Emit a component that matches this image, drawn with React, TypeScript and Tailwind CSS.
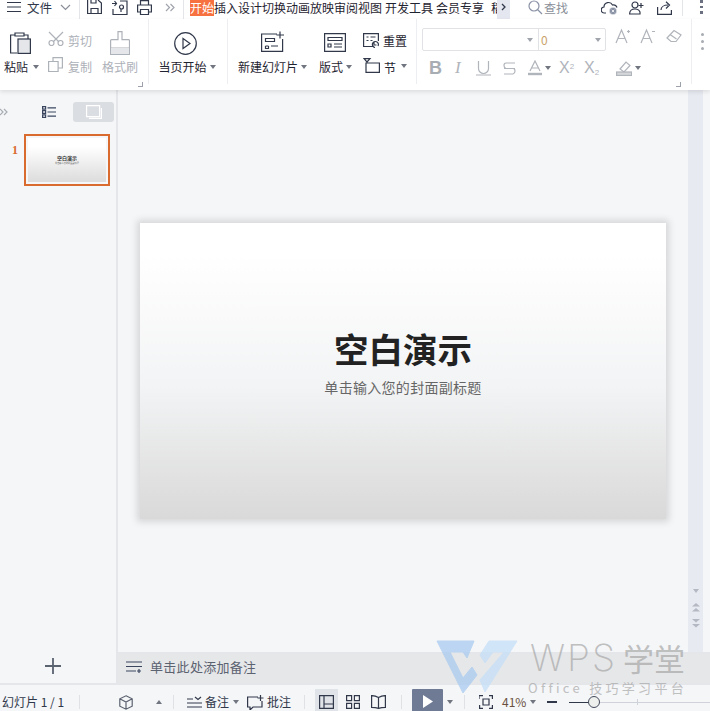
import type { ReactNode } from "react";

const FONT = { fontFamily: '"Noto Sans CJK SC", "Liberation Sans", sans-serif' };

function Icon({ w, h, className, children }: { w: number; h: number; className?: string; children: ReactNode }) {
  return (
    <svg
      width={w}
      height={h}
      viewBox={`0 0 ${w} ${h}`}
      fill="none"
      stroke="currentColor"
      strokeWidth="1.2"
      className={`shrink-0 ${className ?? ""}`}
    >
      {children}
    </svg>
  );
}

function Caret({ className }: { className?: string }) {
  return <span className={`inline-block h-0 w-0 border-x-[3.5px] border-t-[4px] border-x-transparent border-t-[#70757f] ${className ?? ""}`} />;
}

function TitleBar() {
  return (
    <div className="flex h-[19px] shrink-0 items-start overflow-hidden bg-white text-[12px] leading-[15px] text-[#30384a]">
      <Icon w={14} h={12} className="ml-[7px] mt-[1px]">
        <path d="M0 1.5h14M0 6h14M0 10.5h14" />
      </Icon>
      <span className="ml-[6px] text-[12.5px] leading-[15px]">文件</span>
      <Icon w={11} h={7} className="ml-[8px] mt-[4px] text-[#8a8f99]">
        <path d="M1 1l4.500 4.500L10 1" />
      </Icon>
      <div className="ml-[8px] h-[19px] w-px bg-[#e3e5e9]" />
      <Icon w={15} h={15} className="ml-[7px]">
        <path d="M.6 0v13.500h13.800V3L11 0M4 13.500V8.500h7v5M4 0v3h5V0" />
      </Icon>
      <Icon w={16} h={15} className="ml-[10px]">
        <path d="M0 3.500h4M2.500 1l2 2.500-2 2.500M8 1h7v13.500H1V9" />
        <circle cx="9.500" cy="7" r="2" />
        <path d="M9 9v3" />
      </Icon>
      <Icon w={15} h={15} className="ml-[9px]">
        <path d="M3.500 5V.6h8V5M3.500 12H.6V5h13.800v7h-3M3.500 9.500h8v5h-8z" />
      </Icon>
      <Icon w={10} h={9} className="ml-[13px] mt-[3px] text-[#a0a4ac]">
        <path d="M1 1l3.500 3.500L1 8M5.500 1L9 4.500 5.500 8" />
      </Icon>
      <div className="ml-[8px] h-[19px] w-px bg-[#e3e5e9]" />
      <span className="ml-[6px] h-[16px] w-[24px] bg-[#f7703f] text-white">开始</span>
      <span className="whitespace-nowrap text-[#1f2430]">插入设计切换动画放映审阅视图</span>
      <span className="ml-[3px] whitespace-nowrap text-[#1f2430]">开发工具</span>
      <span className="ml-[3px] whitespace-nowrap text-[#1f2430]">会员专享</span>
      <span className="ml-[7px] h-[15px] w-[6px] overflow-hidden text-[#1f2430]">稻</span>
      <div className="flex h-[19px] w-[13px] items-center justify-center bg-[#e4e6f0]">
        <Icon w={5} h={8} className="-mt-[6px]">
          <path d="M1 1l3 3-3 3" strokeWidth="1.300" />
        </Icon>
      </div>
      <Icon w={15} h={15} className="ml-[18px] text-[#8a93a6]">
        <circle cx="6" cy="6" r="5" />
        <path d="M9.500 9.500L14 14" />
      </Icon>
      <span className="ml-[1px] text-[#8a8f99]">查找</span>
      <Icon w={17} h={14} className="ml-[33px] mt-[1px]">
        <path d="M5 12H3.500a3 3 0 01-.5-6 4.500 4.500 0 018.500-2A4 4 0 0116 6.500" />
        <circle cx="12" cy="10" r="3.800" fill="#8a93a6" stroke="#fff" strokeWidth="0.600" />
        <path d="M10.800 8.800l2.400 2.400M13.200 8.800l-2.400 2.400" stroke="#fff" strokeWidth="0.800" />
      </Icon>
      <Icon w={16} h={14} className="ml-[11px] mt-[1px]">
        <circle cx="6" cy="4" r="3" />
        <path d="M.6 13c0-3 2-5 5.400-5s4 1 5 3v2zM12 2v5M9.500 4.500h5" />
      </Icon>
      <Icon w={15} h={14} className="ml-[12px] mt-[1px]">
        <path d="M.6 6v7.400h13.800V9M4 9c0-3 3-5 7-5M9 .8L12.500 4 9 7.500" />
      </Icon>
      <div className="ml-[10px] h-[16px] w-px bg-[#e3e5e9]" />
      <div className="ml-[17px] flex flex-col gap-[3px]">
        <span className="h-[2.500px] w-[2.500px] bg-[#6a7080]" />
        <span className="h-[2.500px] w-[2.500px] bg-[#6a7080]" />
        <span className="h-[2.500px] w-[2.500px] bg-[#6a7080]" />
      </div>
    </div>
  );
}

function Corner({ className }: { className: string }) {
  return <span className={`absolute h-[5px] w-[5px] border-b border-r border-[#9ca1aa] ${className}`} />;
}

function ClipboardGroup() {
  return (
    <div className="relative flex w-[149px] shrink-0 border-r border-[#eceef1]">
      <div className="w-[44px] pl-[4px]">
        <Icon w={21} h={24} className="ml-[6px] mt-[11px] text-[#30384a]">
          <path d="M5 5H.6V23H7M5 3h9v3H5zM14 5h4V9" />
          <rect x="8" y="9" width="12.400" height="14.400" fill="#e4e6ea" />
        </Icon>
        <div className="mt-[5px] flex items-center gap-[5px] leading-[16px]">
          <span>粘贴</span>
          <Caret />
        </div>
      </div>
      <div className="w-[56px] pl-[4px] text-[#adb1b8]">
        <div className="mt-[12px] flex h-[15px] items-center gap-[4px]">
          <Icon w={16} h={15}>
            <path d="M1 1l10 10M15 1L5 11" />
            <circle cx="3.500" cy="12" r="2.500" />
            <circle cx="12.500" cy="12" r="2.500" />
          </Icon>
          <span className="mt-[4px]">剪切</span>
        </div>
        <div className="mt-[11px] flex h-[15px] items-center gap-[5px]">
          <Icon w={15} h={15}>
            <path d="M5 4V.6h9.400V11H10.500M.6 4.500h9.500v10H.6z" />
          </Icon>
          <span className="mt-[4px]">复制</span>
        </div>
      </div>
      <div className="w-[39px] pl-[2px] text-[#adb1b8]">
        <Icon w={20} h={24} className="ml-[8px] mt-[12px]">
          <path d="M8 .6h4v8h6.500a1 1 0 011 1v13.800H.6V9.600a1 1 0 011-1H8zM.6 17h18.800" />
          <rect x="1" y="17" width="18" height="6" fill="#e4e6ea" stroke="none" />
        </Icon>
        <div className="mt-[4px] whitespace-nowrap leading-[16px]">格式刷</div>
      </div>
      <Corner className="left-[138px] top-[63px]" />
    </div>
  );
}

function SlideGroup() {
  return (
    <div className="flex w-[79px] shrink-0 flex-col items-center border-r border-[#eceef1] pr-[6px]">
      <Icon w={23} h={23} className="ml-[1px] mt-[13px] text-[#30384a]">
        <circle cx="11.500" cy="11.500" r="10.800" />
        <path d="M9 6.500l7 5-7 5z" />
      </Icon>
      <div className="mt-[4px] flex items-center gap-[3px] whitespace-nowrap pl-[4px] leading-[16px]">
        <span>当页开始</span>
        <Caret />
      </div>
    </div>
  );
}

function LayoutGroup() {
  return (
    <div className="flex w-[189px] shrink-0 border-r border-[#eceef1] pl-[10px]">
      <div className="w-[81px]">
        <Icon w={24} h={21} className="ml-[23px] mt-[12px] text-[#30384a]">
          <path d="M16 3H.6v17.400h21V8M19 .5v7M15.500 4h7.500M4.500 7.500h9v3h-9zM4.500 15h3M10 15h7M4.500 15v2.500h3V15" />
        </Icon>
        <div className="mt-[7px] flex items-center gap-[3px] whitespace-nowrap leading-[16px]">
          <span>新建幻灯片</span>
          <Caret />
        </div>
      </div>
      <div className="w-[44px]">
        <Icon w={22} h={19} className="ml-[5px] mt-[14px] text-[#30384a]">
          <path d="M.6.6h20.800v17.800H.6zM4 4.500h14v3H4zM4 11h3v3H4zM10 11h8M10 14h8" />
        </Icon>
        <div className="mt-[7px] flex items-center gap-[3px] leading-[16px]">
          <span>版式</span>
          <Caret />
        </div>
      </div>
      <div className="text-[12px] leading-[15px]">
        <div className="mt-[14px] flex h-[15px] items-center gap-[4px]">
          <Icon w={16} h={15} className="text-[#30384a]">
            <path d="M10 13.500H.6V.6h14.800V8M3.500 4h2M7.500 4h5M3.500 7.500h2M7.500 7.500h2M15 13a3 3 0 10-3 1.500M11 9.500v2.500h2.500" />
          </Icon>
          <span>重置</span>
        </div>
        <div className="mt-[10px] flex h-[15px] items-center gap-[4px]">
          <Icon w={17} h={15} className="text-[#30384a]">
            <path d="M3 5h13.400v9.400H3zM1 .6h6L4 4z" />
          </Icon>
          <span className="mt-[4px]">节</span>
          <Caret className="ml-[1px]" />
        </div>
      </div>
    </div>
  );
}

function FontGroup() {
  return (
    <div className="relative w-[275px] shrink-0 border-r border-[#eceef1] pl-[5px]">
      <div className="mt-[9px] flex items-start">
        <div className="flex h-[23px] w-[184px] items-center rounded-[2px] border border-[#e0e2e6]">
          <div className="flex h-full w-[116px] items-center justify-end border-r border-[#e0e2e6] pr-[5px]">
            <Caret className="border-t-[#a0a4ac]" />
          </div>
          <span className="ml-[2px] flex-1 text-[#c9a36a]">0</span>
          <Caret className="mr-[4px] border-t-[#a0a4ac]" />
        </div>
        <div className="ml-[9px] flex items-center text-[#b0b4bb]">
          <Icon w={15} h={16}>
            <path d="M1 15L6.500 2 12 15M3 10.500h7M12 3.500h3M13.500 2v3" />
          </Icon>
          <Icon w={15} h={16} className="ml-[10px]">
            <path d="M1 15L6.500 2 12 15M3 10.500h7M12 3.500h3" />
          </Icon>
          <Icon w={16} h={14} className="ml-[11px]">
            <path d="M1 9l7-7.500L15 6l-5 6.500H5z" />
            <path d="M4 5.500l6.500 4.500" />
          </Icon>
        </div>
      </div>
      <div className="mt-[7px] flex items-center text-[#b0b4bb]">
        <span className="ml-[7px] w-[14px] text-[18px] font-bold leading-[20px] text-[#a8acb3]" style={{ fontFamily: '"Liberation Sans", sans-serif' }}>B</span>
        <span className="ml-[12px] w-[10px] text-[17px] italic leading-[20px]" style={{ fontFamily: '"Liberation Serif", serif' }}>I</span>
        <Icon w={15} h={16} className="ml-[11px]">
          <path d="M2.500 1v7.500a5 5 0 0010 0V1M0 15h15" />
        </Icon>
        <Icon w={13} h={13} className="ml-[12px]">
          <path d="M12 1H3Q1 1 1 3.500T3 6.500h9M1 6.500h9q2 0 2 2.500t-2 3H1" />
        </Icon>
        <Icon w={14} h={16} className="ml-[12px]">
          <path d="M2 11L7 1l5 10M3.500 8h7" />
          <path d="M0 14h14" strokeWidth="2.400" />
        </Icon>
        <Caret className="ml-[3px] border-t-[#9ca1aa]" />
        <span className="ml-[8px] w-[19px] whitespace-nowrap text-[16px] leading-[20px]" style={{ fontFamily: '"Liberation Sans", sans-serif' }}>
          X<sup className="text-[8px]">2</sup>
        </span>
        <span className="ml-[6px] w-[17px] whitespace-nowrap text-[16px] leading-[20px]" style={{ fontFamily: '"Liberation Sans", sans-serif' }}>
          X<sub className="text-[8px]">2</sub>
        </span>
        <Icon w={16} h={15} className="ml-[15px]">
          <path d="M4 8l6-7 4 3.500-6 6.500zM0 14.400h15.400" />
          <rect x=".6" y="11" width="15" height="3.500" fill="#d4d6da" />
        </Icon>
        <Caret className="ml-[3px] border-t-[#9ca1aa]" />
      </div>
      <Corner className="left-[259px] top-[63px]" />
    </div>
  );
}

function Ribbon() {
  return (
    <div className="relative z-10 flex h-[71px] shrink-0 overflow-hidden bg-white pb-[6px] text-[12px] text-[#1f2430] shadow-[0_2px_4px_rgba(0,0,0,0.1)]">
      <ClipboardGroup />
      <SlideGroup />
      <LayoutGroup />
      <FontGroup />
      <div className="ml-[9px] mt-[14px] flex flex-col gap-[4px]">
        <span className="h-[3px] w-[3px] rounded-full bg-[#a8acb3]" />
        <span className="h-[3px] w-[3px] rounded-full bg-[#a8acb3]" />
        <span className="h-[3px] w-[3px] rounded-full bg-[#a8acb3]" />
      </div>
    </div>
  );
}

function SlidePane() {
  return (
    <div className="flex w-[118px] shrink-0 flex-col border-r-2 border-[#e4e6ea]">
      <div className="mt-[12px] flex h-[20px] items-center">
        <Icon w={8} h={8} className="text-[#a8acb3]">
          <path d="M0 1l3 3-3 3M4 1l3 3-3 3" />
        </Icon>
        <Icon w={14} h={12} className="ml-[34px] text-[#3a4660]">
          <path d="M.6.6h3v2.600h-3zM.6 4.700h3v2.600h-3zM.6 8.800h3v2.600h-3zM5.500 1.900H14M5.500 6H14M5.500 10.100H14" />
        </Icon>
        <div className="ml-[17px] flex h-[20px] w-[41px] items-center justify-center rounded-[3px] bg-[#dadde1]">
          <Icon w={16} h={14} className="text-white">
            <path d="M.6.6h13v11H.6zM15.400 3v10.400H3" />
          </Icon>
        </div>
      </div>
      <div className="mt-[12px] flex items-start">
        <span className="ml-[12px] mt-[9px] w-[12px] text-[12px] font-bold leading-[15px] text-[#d96b2e]" style={{ fontFamily: '"Liberation Serif", serif' }}>1</span>
        <div className="flex h-[52px] w-[86px] flex-col items-center border-2 border-[#d96b2e] bg-[#f5f6f8] p-[2px]">
          <div className="flex h-full w-full flex-col items-center justify-center bg-gradient-to-b from-white from-20% to-[#dcdcdc]">
            <span className="-mt-px text-[5px] font-bold leading-[6px] text-[#333]">空白演示</span>
            <span className="whitespace-nowrap text-[2.200px] leading-[4px] text-[#666]">单击输入您的封面副标题</span>
          </div>
        </div>
      </div>
      <div className="mb-[9px] mt-auto flex justify-center pr-[11px]">
        <Icon w={16} h={16} className="text-[#5b6270]">
          <path d="M8 0v16M0 8h16" strokeWidth="1.800" />
        </Icon>
      </div>
    </div>
  );
}

function Editor() {
  return (
    <div className="flex min-w-0 flex-1 flex-col">
      <div className="flex min-h-0 flex-1">
        <div className="flex flex-1 items-center justify-center">
          <div className="flex h-[296px] w-[526px] flex-col items-center bg-gradient-to-b from-white from-10% via-[#f3f4f5] via-55% to-[#d9d9d9] shadow-[0_0_7px_3px_rgba(0,0,0,0.13)]">
            <h1 className="mt-[103px] text-[34.500px] font-bold leading-[44px] text-[#222]">空白演示</h1>
            <p className="mt-[7px] text-[14px] leading-[20px] tracking-[0.300px] text-[#666]">单击输入您的封面副标题</p>
          </div>
        </div>
        <div className="flex w-[15px] flex-col items-center justify-end gap-[7px] bg-[#e8eaf1] pb-[24px] text-[#b4b8c2]">
          <Caret className="mb-[3px] border-t-[#b4b8c2]" />
          <Icon w={8} h={9}>
            <path d="M4 0L0 3.500h8zM4 5L0 8.500h8z" fill="currentColor" stroke="none" />
          </Icon>
          <Icon w={8} h={9}>
            <path d="M4 3.500L0 0h8zM4 8.500L0 5h8z" fill="currentColor" stroke="none" />
          </Icon>
        </div>
        <div className="w-[7px]" />
      </div>
      <div className="flex h-[31px] shrink-0 items-center border-t-2 border-[#e4e6ea] bg-[#e6e7e9] pl-[8px] text-[13px] tracking-[0.300px] text-[#5b6270]">
        <Icon w={16} h={12} className="-mt-[3px] text-[#3a4660]">
          <path d="M0 1h16M0 5.500h16M0 10h10M13 8v4M11 10h4" />
        </Icon>
        <span className="ml-[8px] -mt-[3px]">单击此处添加备注</span>
      </div>
    </div>
  );
}

function StatusBar() {
  return (
    <div className="flex h-[28px] shrink-0 items-center border-t-2 border-[#e4e6ea] bg-[#f5f6f8] pl-[2px] pt-[8px] text-[12px] text-[#30384a]">
      <span className="w-[66px] whitespace-nowrap">幻灯片 1 / 1</span>
      <div className="ml-[11px] h-[14px] w-px bg-[#dfe1e5]" />
      <Icon w={14} h={15} className="ml-[39px] text-[#5b6270]">
        <path d="M7 .8l6.200 3v7.400L7 14.200.8 11.200V3.800zM.8 3.800L7 7l6.200-3.200M7 7v7" />
      </Icon>
      <span className="ml-[23px] h-0 w-0 border-x-[3.500px] border-b-[4px] border-x-transparent border-b-[#70757f]" />
      <div className="ml-[11px] h-[14px] w-px bg-[#dfe1e5]" />
      <Icon w={16} h={12} className="ml-[13px]">
        <path d="M0 3h6M0 7h15M0 11h15M8 1l3 2.500L14 1" />
      </Icon>
      <span className="ml-[2px]">备注</span>
      <Caret className="ml-[4px]" />
      <Icon w={17} h={15} className="ml-[8px]">
        <path d="M11 2H.6v10H3v3l3-3h9V6M13.500 0v6M10.500 3h6" />
      </Icon>
      <span className="ml-[3px]">批注</span>
      <div className="ml-[13px] h-[14px] w-px bg-[#dfe1e5]" />
      <div className="ml-[10px] flex h-[22px] w-[23px] items-center justify-center self-end bg-[#e0e3e8] pt-[4px]">
        <Icon w={15} h={14}>
          <path d="M.6.6h13.800v12.800H.6zM5 .6v12.800M5 9h9.400" />
        </Icon>
      </div>
      <Icon w={14} h={14} className="ml-[8px]">
        <path d="M.6.6h5v5h-5zM8.400.6h5v5h-5zM.6 8.400h5v5h-5zM8.400 8.400h5v5h-5z" />
      </Icon>
      <Icon w={15} h={14} className="ml-[11px]">
        <path d="M7.500 2.500Q4 .5.600.6v11.800q4 0 6.900 1 3-1 6.900-1V.6q-3.400-.1-6.900 1.900zM7.500 2.500v11" />
      </Icon>
      <div className="ml-[15px] h-[14px] w-px bg-[#dfe1e5]" />
      <div className="ml-[10px] flex h-[22px] w-[31px] items-center justify-center self-end rounded-t-[1px] bg-[#6f7a94] pt-[2px]">
        <Icon w={11} h={13} className="text-white">
          <path d="M1 0l10 6.500L1 13z" fill="currentColor" stroke="none" />
        </Icon>
      </div>
      <Caret className="ml-[4px]" />
      <div className="ml-[11px] h-[14px] w-px bg-[#dfe1e5]" />
      <Icon w={14} h={14} className="ml-[14px]">
        <path d="M0 4V.6h4M10 .6h3.400V4M13.400 10v3.400H10M4 13.400H.6V10M4 4h6v6H4z" />
      </Icon>
      <span className="ml-[9px] w-[25px] text-[#6a5040]">41%</span>
      <Caret className="ml-[3px]" />
      <span className="ml-[11px] h-[2px] w-[10px] bg-[#30384a]" />
      <div className="relative ml-[12px] h-px flex-1 bg-[#cfd2d9]">
        <div className="h-px w-[22px] bg-[#30384a]" />
        <span className="absolute left-[19px] top-[-6px] h-[12px] w-[12px] rounded-full border border-[#444b5a] bg-[#eef0ee]" />
        <span className="absolute left-[68px] top-[-3px] h-[6px] w-px bg-[#cfd2d9]" />
      </div>
    </div>
  );
}

function Watermark() {
  return (
    <div className="pointer-events-none absolute left-[436px] top-[640px] flex">
      <svg width="82" height="56" viewBox="0 0 82 56">
        <path d="M1 1H38L31 18 27 12H14L27 38 36 27 41 35 27 53z" fill="#a9cbf0" opacity="0.75" stroke="#a9cbf0" strokeLinejoin="round" />
        <path d="M81 1H53L44 15 49 23 57 12H68L44 40 49 52z" fill="#c6e0f8" opacity="0.75" stroke="#c6e0f8" strokeLinejoin="round" />
      </svg>
      <div className="ml-[12px] text-[#a8a8a8] opacity-70">
        <div className="flex h-[36px] items-center whitespace-nowrap leading-none">
          <span className="text-[37px] font-extralight leading-[36px] tracking-[2px]" style={{ fontFamily: "Inter, sans-serif" }}>WPS</span>
          <span className="ml-[6px] text-[31px] leading-[36px]">学堂</span>
        </div>
        <div className="-ml-[2px] mt-[5px] whitespace-nowrap text-[13px] leading-[14px] tracking-[3.300px]">Office 技巧学习平台</div>
      </div>
    </div>
  );
}

export default function App() {
  return (
    <div className="relative flex h-[711px] w-[710px] flex-col overflow-hidden bg-[#f5f6f8]" style={FONT}>
      <TitleBar />
      <Ribbon />
      <div className="flex min-h-0 flex-1">
        <SlidePane />
        <Editor />
      </div>
      <StatusBar />
      <Watermark />
    </div>
  );
}
